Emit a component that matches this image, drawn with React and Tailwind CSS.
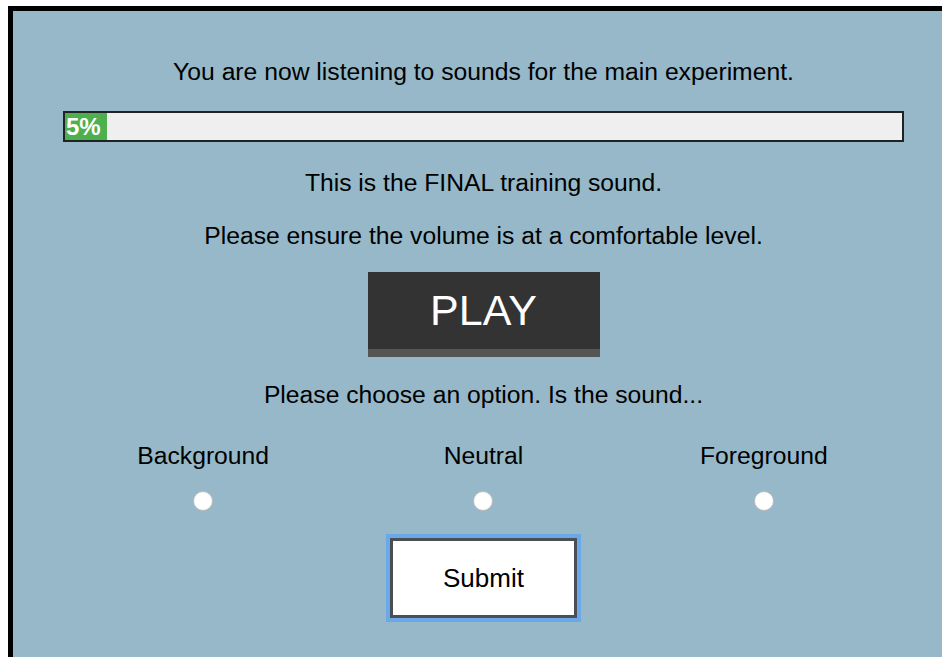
export default function App() {
  const options = ["Background", "Neutral", "Foreground"];

  return (
    <div className="min-h-screen bg-white pt-[6px] pl-[8px] overflow-hidden">
      <div
        className="min-h-[651px] border-l-[5px] border-t-[5px] border-black bg-[#96b8c8] text-black pl-[50px] pt-[47px]"
        style={{ fontFamily: '"Liberation Sans", Arial, sans-serif' }}
      >
        <div className="w-[841px] flex flex-col items-center text-[24.7px] leading-[28px]">
          <p>You are now listening to sounds for the main experiment.</p>

          {/* progress */}
          <div className="mt-[25px] w-full h-[31px] border-2 border-[#222] bg-[#efefef]">
            <div className="h-full w-[5%] bg-[#4caf50] text-white font-bold text-[24px] leading-[27px] pl-[1px] whitespace-nowrap">
              5%
            </div>
          </div>

          <p className="mt-[27px]">This is the FINAL training sound.</p>
          <p className="mt-[25px]">Please ensure the volume is at a comfortable level.</p>

          <button className="mt-[22px] w-[232px] h-[85px] bg-[#333] border-b-[8px] border-[#555] text-white text-[43px] leading-none">
            PLAY
          </button>

          <p className="mt-[24px]">Please choose an option. Is the sound...</p>

          <div className="mt-[33px] w-full grid grid-cols-3">
            {options.map((o) => (
              <label key={o} className="flex flex-col items-center">
                <span>{o}</span>
                <span className="mt-[21px] w-[20px] h-[20px] rounded-full bg-white border border-[#bbb]" />
              </label>
            ))}
          </div>

          <button className="mt-[27px] w-[187px] h-[80px] bg-white border-[3px] border-[#4a4f55] ring-4 ring-[#6aa8e8] text-[26px]">
            Submit
          </button>
        </div>
      </div>
    </div>
  );
}
